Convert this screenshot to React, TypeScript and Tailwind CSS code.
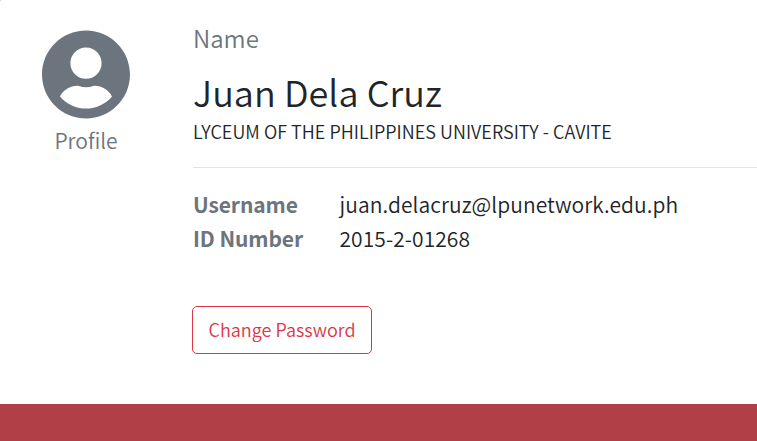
import { FaUserCircle } from "react-icons/fa";

const details = [
  { label: "Username", value: "juan.delacruz@lpunetwork.edu.ph" },
  { label: "ID Number", value: "2015-2-01268" },
];

export default function App() {
  return (
    <div className="flex h-[441px] w-full flex-col overflow-hidden bg-[#c8c8c8] font-['Noto_Sans_CJK_JP','Noto_Sans',sans-serif] font-[350] text-[#212529]">
      <main className="flex flex-1 rounded-tl-[2px] bg-white">
        <aside className="flex w-[193px] shrink-0 flex-col items-center pt-[29px] pr-[21px] text-[#6c757d]">
          <FaUserCircle className="h-[91px] w-[88px]" />
          <span className="mt-1 text-[21px] leading-8">Profile</span>
        </aside>
        <section className="flex min-w-0 flex-1 flex-col items-start whitespace-nowrap">
          <h2 className="mt-5 text-[24px] leading-9 text-[#6c757d]">Name</h2>
          <h1 className="mt-[11px] text-[36px] leading-[48px] tracking-[0.05px]">Juan Dela Cruz</h1>
          <p className="mt-[2px] text-[18px] leading-7 tracking-[0.04px]">LYCEUM OF THE PHILIPPINES UNIVERSITY - CAVITE</p>
          <hr className="mt-[22px] w-full border-t border-[#e3e3e4]" />
          <dl className="mt-[19px] grid grid-cols-[146px_auto] text-[21px] leading-[34px]">
            {details.map((d) => (
              <div key={d.label} className="contents">
                <dt className="font-bold tracking-[-0.1px] text-[#6c757d]">{d.label}</dt>
                <dd className="pl-[0.5px] tracking-[0.07px]">{d.value}</dd>
              </div>
            ))}
          </dl>
          <button className="mt-[51px] -ml-px flex h-12 w-[180px] items-center justify-center rounded-[5px] border border-[#dc3545] pb-0.5 text-[18px] leading-7 tracking-[0.03px] text-[#dc3545]">
            Change Password
          </button>
        </section>
      </main>
      <footer className="h-[37px] shrink-0 bg-[#b03f47]" />
    </div>
  );
}
